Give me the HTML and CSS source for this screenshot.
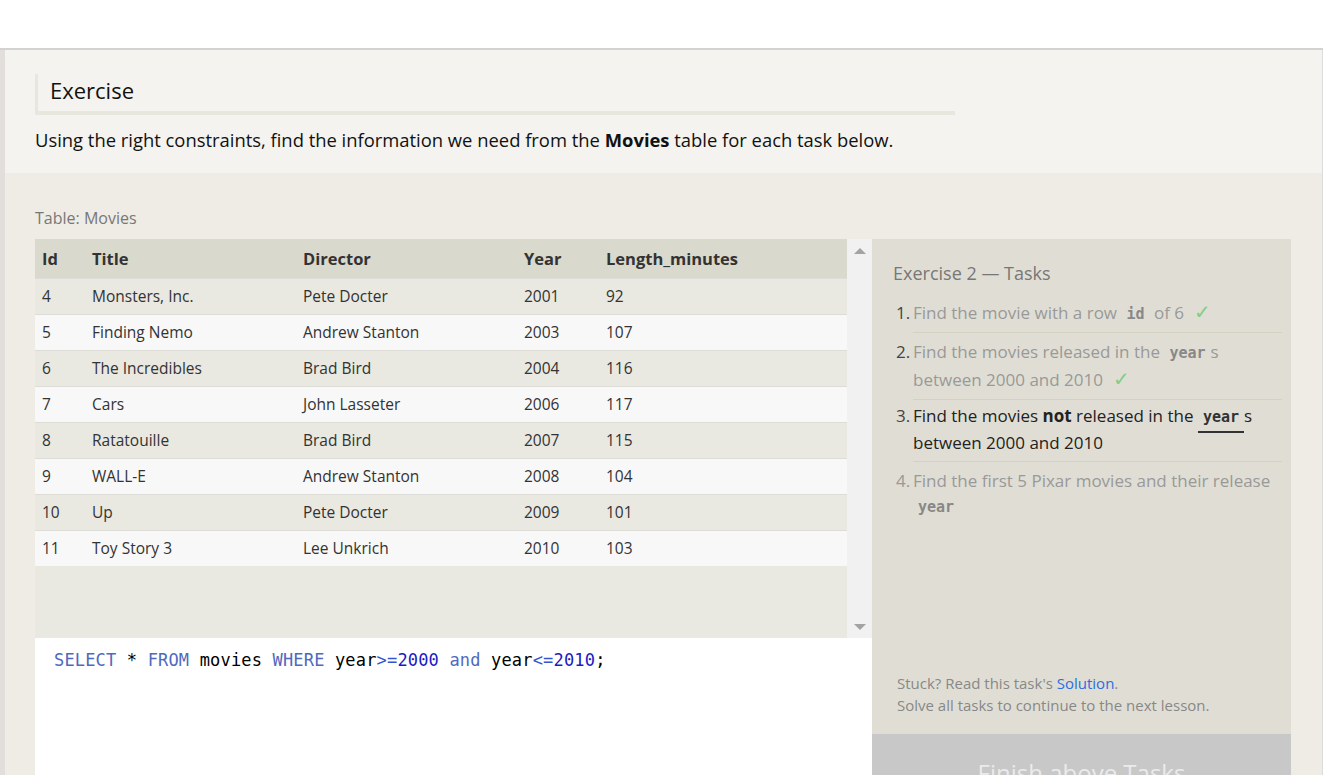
FILE: index.html
```html
<!DOCTYPE html>
<html>
<head>
<meta charset="utf-8">
<link rel="stylesheet" href="styles.css">
</head>
<body>
<div class="topbar"></div>
<div class="page">
  <div class="strip"></div>
  <main class="main">
    <section class="intro">
      <div class="heading"><h1>Exercise</h1></div>
      <p class="lead">Using the right constraints, find the information we need from the <strong>Movies</strong> table for each task below.</p>
    </section>
    <section class="workspace">
      <div class="table-label">Table: Movies</div>
      <div class="grid">
        <div class="left">
          <div class="results">
            <div class="table-area">
              <table class="movies">
                <colgroup>
                  <col class="c-id"><col class="c-title"><col class="c-dir"><col class="c-year"><col class="c-len">
                </colgroup>
                <thead>
                  <tr><th>Id</th><th>Title</th><th>Director</th><th>Year</th><th>Length_minutes</th></tr>
                </thead>
                <tbody>
                  <tr><td>4</td><td>Monsters, Inc.</td><td>Pete Docter</td><td>2001</td><td>92</td></tr>
                  <tr><td>5</td><td>Finding Nemo</td><td>Andrew Stanton</td><td>2003</td><td>107</td></tr>
                  <tr><td>6</td><td>The Incredibles</td><td>Brad Bird</td><td>2004</td><td>116</td></tr>
                  <tr><td>7</td><td>Cars</td><td>John Lasseter</td><td>2006</td><td>117</td></tr>
                  <tr><td>8</td><td>Ratatouille</td><td>Brad Bird</td><td>2007</td><td>115</td></tr>
                  <tr><td>9</td><td>WALL-E</td><td>Andrew Stanton</td><td>2008</td><td>104</td></tr>
                  <tr><td>10</td><td>Up</td><td>Pete Docter</td><td>2009</td><td>101</td></tr>
                  <tr><td>11</td><td>Toy Story 3</td><td>Lee Unkrich</td><td>2010</td><td>103</td></tr>
                </tbody>
              </table>
            </div>
            <div class="scrollbar">
              <span class="arrow up"></span>
              <span class="arrow down"></span>
            </div>
          </div>
          <div class="editor">
            <pre class="code"><span class="kw">SELECT</span> * <span class="kw">FROM</span> movies <span class="kw">WHERE</span> year<span class="op">&gt;=</span><span class="num">2000</span> <span class="kw">and</span> year<span class="op">&lt;=</span><span class="num">2010</span>;</pre>
          </div>
        </div>
        <aside class="tasks">
          <h2 class="tasks-title">Exercise 2 — Tasks</h2>
          <ol class="task-list">
            <li class="task done"><span class="n">1.</span><div class="body">Find the movie with a row <code>id</code> of 6 <span class="check">✓</span></div></li>
            <li class="task done"><span class="n">2.</span><div class="body">Find the movies released in the <code>year</code>s between 2000 and 2010 <span class="check">✓</span></div></li>
            <li class="task active"><span class="n">3.</span><div class="body">Find the movies <strong>not</strong> released in the <code class="ul">year</code>s between 2000 and 2010</div></li>
            <li class="task todo"><span class="n">4.</span><div class="body last">Find the first 5 Pixar movies and their release <code>year</code></div></li>
          </ol>
          <div class="spacer"></div>
          <div class="help">
            <div>Stuck? Read this task's <a class="link" href="#">Solution</a>.</div>
            <div>Solve all tasks to continue to the next lesson.</div>
          </div>
          <div class="finish">Finish above Tasks</div>
        </aside>
      </div>
    </section>
  </main>
  <div class="edge"></div>
</div>
</body>
</html>
```
FILE: styles.css
```css
* { box-sizing: border-box; }
html, body { margin: 0; padding: 0; }
body {
  font-family: "Open Sans", "Noto Sans", sans-serif;
  color: #222;
  background: #fff;
  overflow: hidden;
}
.topbar {
  height: 50px;
  background: #fff;
  border-bottom: 2px solid #d2d2d2;
}
.page {
  display: flex;
  min-height: 740px;
}
.strip {
  width: 5px;
  background: #e1dedb;
  flex: none;
}
.edge {
  width: 1px;
  background: #dcdcdc;
  flex: none;
}
.main {
  flex: 1;
  min-width: 0;
}
.intro {
  background: #f4f3ef;
  padding: 24px 30px 0 30px;
  height: 123px;
}
.heading {
  width: 920px;
  border-left: 3px solid #e8e7dd;
  border-bottom: 4px solid #e8e7dd;
  padding-left: 12px;
  height: 41px;
}
.heading h1 {
  margin: 0;
  font-size: 22px;
  font-weight: 400;
  line-height: 33px;
  color: #111;
}
.lead {
  margin: 12px 0 0 0;
  font-size: 18.4px;
  line-height: 26px;
  color: #111;
}
.lead strong { font-weight: 700; }
.workspace {
  background: #efece5;
  padding: 34px 30px 0 30px;
}
.table-label {
  font-size: 16px;
  color: #777;
  line-height: 22px;
  margin-bottom: 10px;
}
.grid {
  display: grid;
  grid-template-columns: 837px 419px;
}
.left {
  display: flex;
  flex-direction: column;
}
.results {
  display: flex;
  height: 399px;
}
.table-area {
  width: 812px;
  background: #e9e8e1;
}
.movies {
  width: 812px;
  border-collapse: collapse;
  table-layout: fixed;
  color: #333;
}
.c-id { width: 50px; }
.c-title { width: 211px; }
.c-dir { width: 221px; }
.c-year { width: 82px; }
.movies th {
  background: #dad9cd;
  text-align: left;
  font-size: 16.5px;
  font-weight: 700;
  height: 39px;
  padding: 1px 7px 0;
  color: #333;
}
.movies td {
  font-size: 15.5px;
  height: 36px;
  padding: 0 7px;
  border-top: 1px solid #dedcd6;
}
.movies tbody tr:nth-child(odd) td { background: #e9e8e1; }
.movies tbody tr:nth-child(even) td { background: #f8f8f8; }
.scrollbar {
  width: 25px;
  background: #f1f1f1;
  display: flex;
  flex-direction: column;
  justify-content: space-between;
  align-items: center;
  padding: 9px 0 8px;
}
.arrow {
  width: 0;
  height: 0;
  border-left: 6px solid transparent;
  border-right: 6px solid transparent;
}
.arrow.up { border-bottom: 6px solid #a3a3a3; }
.arrow.down { border-top: 6px solid #a3a3a3; }
.editor {
  background: #fff;
  height: 168px;
  padding: 12px 19px;
}
.code {
  margin: 0;
  font-family: "DejaVu Sans Mono", "Liberation Mono", monospace;
  font-size: 17px;
  letter-spacing: 0.17px;
  line-height: 20px;
  color: #000;
}
.kw { color: #5169bd; }
.op { color: #3553d2; }
.num { color: #1b1bc2; }
.tasks {
  background: #e0ded4;
  display: flex;
  flex-direction: column;
  padding: 22px 0 0 0;
}
.tasks-title {
  margin: 0 0 9px 21px;
  font-size: 18px;
  font-weight: 400;
  line-height: 24px;
  color: #777;
}
.task-list {
  list-style: none;
  margin: 0;
  padding: 0 9px 0 24px;
}
.task {
  display: flex;
  font-size: 17px;
  line-height: 28px;
}
.task .n {
  width: 17px;
  flex: none;
  padding-top: 5px;
  color: #444;
}
.task .body {
  flex: 1;
  padding: 5px 0 5px;
  border-bottom: 1px solid #d3d0c4;
}
.task.active .body {
  color: #222;
  padding-top: 2px;
  line-height: 27px;
}
.task.active .n { padding-top: 2px; line-height: 27px; }
.task.todo .body {
  padding-top: 6px;
  line-height: 25px;
}
.task.todo .n { padding-top: 6px; line-height: 25px; }
.task .body.last { border-bottom: none; }
.task.done .body { color: #999; }
.task.todo .body, .task.todo .n { color: #999; }
.task code {
  font-family: "DejaVu Sans Mono", "Liberation Mono", monospace;
  font-weight: 700;
  font-size: 15px;
  line-height: 1;
  padding: 0 5px;
  color: #888;
}
.task.active code { color: #333; }
.task code.ul { border-bottom: 2px solid #333; padding-bottom: 5px; }
.check {
  color: #86cc86;
  font-size: 20px;
  line-height: 1;
  margin-left: 6px;
  font-family: "DejaVu Sans", sans-serif;
  font-weight: 300;
}
.spacer { flex: 1; }
.help {
  padding: 0 0 18px 25px;
  font-size: 15px;
  line-height: 22px;
  color: #888;
}
.link { color: #2b6de0; text-decoration: none; }
.finish {
  background: #c8c8c8;
  color: #ebebeb;
  font-size: 24px;
  text-align: center;
  height: 72px;
  line-height: 36px;
  padding-top: 21px;
}
```
